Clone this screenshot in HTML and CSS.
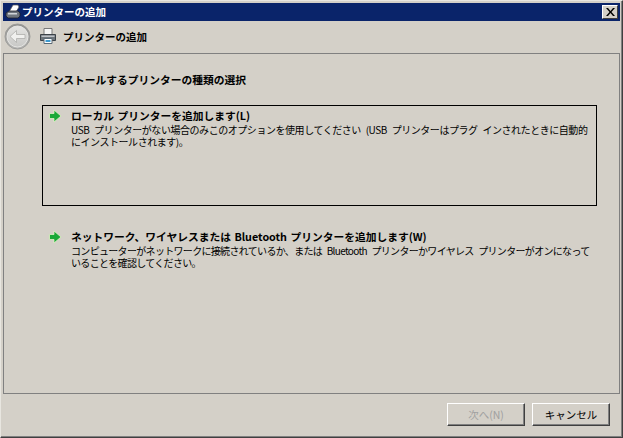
FILE: index.html
```html
<!DOCTYPE html>
<html lang="ja">
<head>
  <meta charset="UTF-8">
  <title>プリンターの追加</title>
  <link rel="stylesheet" href="styles.css">
</head>
<body>
  <div class="window">
    <div class="titlebar">
      <svg class="title-icon" width="18" height="16" viewBox="0 0 18 16">
        <path d="M9 1h5l1 2-3 5H5z" fill="#fff" stroke="#555" stroke-width=".7"/>
        <path d="M2 9l3-2h9l2 2v3l-2 2H4l-2-2z" fill="#6f767e" stroke="#1c2028" stroke-width=".8"/>
        <path d="M4 9h9v1.500H4z" fill="#d0d4d8"/>
      </svg>
      <span class="title-text">プリンターの追加</span>
      <button class="close-btn">
        <svg width="9" height="8" viewBox="0 0 9 8"><path d="M0 0h2l2.500 3L7 0h2L5.500 4 9 8H7L4.500 5 2 8H0l3.500-4z" fill="#000"/></svg>
      </button>
    </div>

    <div class="header">
      <div class="back-btn">
        <svg width="27" height="27" viewBox="0 0 27 27">
          <defs>
            <linearGradient id="ring" x1="0" y1="0" x2="0" y2="1">
              <stop offset="0" stop-color="#8e8e8c"/>
              <stop offset="1" stop-color="#b8b8b6"/>
            </linearGradient>
            <linearGradient id="face" x1="0" y1="0" x2="0" y2="1">
              <stop offset="0" stop-color="#e4e4e2"/>
              <stop offset="1" stop-color="#c8c8c6"/>
            </linearGradient>
          </defs>
          <circle cx="13.500" cy="13.500" r="12.500" fill="url(#ring)" stroke="#9c9c9a"/>
          <circle cx="13.500" cy="13.500" r="10.500" fill="url(#face)" stroke="#e6e6e4"/>
          <path d="M6 13.500l6.500-6v4h8.500v4h-8.500v4z" fill="#f0f0ee" stroke="#aeaeac" stroke-width=".8"/>
        </svg>
      </div>
      <svg class="printer" width="18" height="18" viewBox="0 0 18 18">
        <path d="M5 1.500h8v6H5z" fill="#f6f6f6" stroke="#7a7a7a"/>
        <path d="M1.500 7.500h15v6h-15z" fill="#6e747a" stroke="#3c4248"/>
        <path d="M2.500 8.500h13V10h-13z" fill="#bcc1c6"/>
        <path d="M5 11.500h8v5H5z" fill="#fff" stroke="#5a6a76"/>
        <path d="M6.500 13h5v2h-5z" fill="#3d9ad0"/>
      </svg>
      <span class="header-title">プリンターの追加</span>
    </div>

    <div class="content">
      <h2 class="heading">インストールするプリンターの種類の選択</h2>

      <div class="option selected">
        <svg class="arrow" width="14" height="14" viewBox="0 0 14 14"><path d="M1.500 4.500h4.500V1l7 6-7 6V9.500H1.500z" fill="#1aa838" stroke="#dff2c4" stroke-width=".8"/></svg>
        <div class="option-body">
          <div class="option-title">ローカル プリンターを追加します(L)</div>
          <div class="option-desc desc-local">USB プリンターがない場合のみこのオプションを使用してください (USB プリンターはプラグ インされたときに自動的<br>にインストールされます)。</div>
        </div>
      </div>

      <div class="option">
        <svg class="arrow" width="14" height="14" viewBox="0 0 14 14"><path d="M1.500 4.500h4.500V1l7 6-7 6V9.500H1.500z" fill="#1aa838" stroke="#dff2c4" stroke-width=".8"/></svg>
        <div class="option-body">
          <div class="option-title">ネットワーク、ワイヤレスまたは Bluetooth プリンターを追加します(W)</div>
          <div class="option-desc desc-network">コンピューターがネットワークに接続されているか、または Bluetooth プリンターかワイヤレス プリンターがオンになって<br>いることを確認してください。</div>
        </div>
      </div>
    </div>

    <div class="footer">
      <button class="btn" disabled>次へ(N)</button>
      <button class="btn">キャンセル</button>
    </div>
  </div>
</body>
</html>
```

FILE: styles.css
```css
* {
  box-sizing: border-box;
}

html, body {
  margin: 0;
  height: 100%;
}

body {
  background: #d4d0c8;
  font-family: "Noto Sans CJK JP", "Liberation Sans", sans-serif;
  font-size: 11px;
  color: #000;
  overflow: hidden;
}

.window {
  height: 438px;
  display: flex;
  flex-direction: column;
  padding: 2px;
  border: 1px solid;
  border-color: #e8e6e0 #404040 #404040 #e8e6e0;
  box-shadow: inset -1px -1px 0 #808080;
}

.titlebar {
  height: 18px;
  flex: none;
  display: flex;
  align-items: center;
  background: #0a246a;
  color: #fff;
  font-size: 10.5px;
  font-weight: bold;
  padding: 0 2px 0 1px;
}

.title-text {
  flex: 1;
  line-height: 18px;
}

.close-btn {
  width: 16px;
  height: 14px;
  padding: 0;
  display: flex;
  align-items: center;
  justify-content: center;
  background: #d4d0c8;
  border: 1px solid;
  border-color: #fff #404040 #404040 #fff;
}

.header {
  height: 32px;
  flex: none;
  display: flex;
  align-items: center;
  padding: 0 0 2px 1px;
  font-size: 10.5px;
  font-weight: bold;
}

.back-btn {
  display: flex;
  width: 27px;
  margin-right: 8px;
}

.printer {
  margin-right: 6px;
}

.content {
  flex: 1;
  border: 1px solid #808080;
  padding: 18px 22px 0 38px;
}

.heading {
  margin: 0 0 17px;
  font-size: 10.75px;
  line-height: 16px;
  font-weight: bold;
}

.option {
  display: flex;
  height: 101px;
  border: 1px solid transparent;
  padding: 3px 5px 3px 4px;
  line-height: 12px;
}

.option.selected {
  border-color: #000;
  margin-bottom: 20px;
}

.arrow {
  flex: none;
  margin: 0 9px 0 1px;
}

.option-title {
  font-size: 10.75px;
  font-weight: bold;
  line-height: 14px;
  word-spacing: 1px;
  margin-bottom: 1px;
}

.option-desc {
  font-size: 10px;
  word-spacing: 3px;
  white-space: nowrap;
}

.desc-local {
  letter-spacing: -0.45px;
}

.desc-network {
  letter-spacing: -0.68px;
}

.footer {
  height: 41px;
  flex: none;
  display: flex;
  justify-content: flex-end;
  align-items: center;
  gap: 7px;
  padding: 0 10px 0 0;
}

.btn {
  width: 78px;
  height: 23px;
  padding: 0;
  background: #d4d0c8;
  font: inherit;
  font-size: 10.5px;
  color: #000;
  border: 1px solid;
  border-color: #fff #404040 #404040 #fff;
  box-shadow: inset -1px -1px 0 #808080;
}

.btn:disabled {
  color: #a0a0a0;
}
```
